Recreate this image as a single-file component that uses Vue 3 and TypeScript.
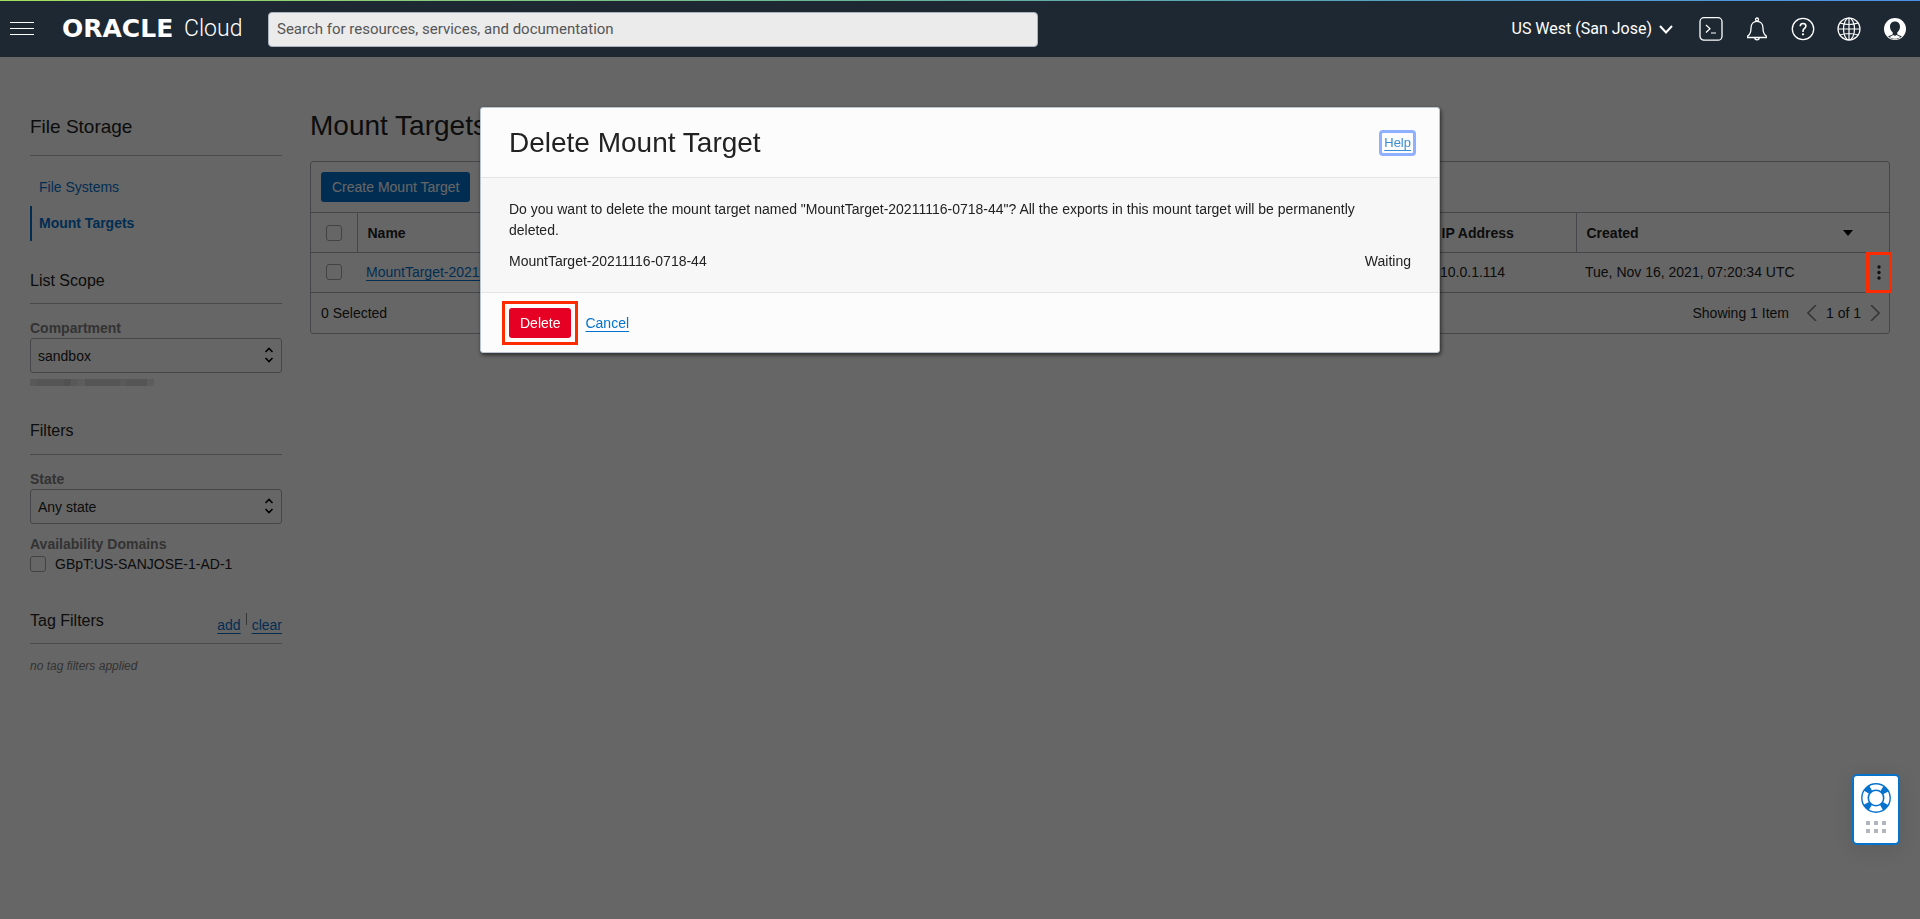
<script setup lang="ts">
import { ref } from 'vue'

interface MountTarget {
  name: string
  ip: string
  created: string
}

const region = 'US West (San Jose)'
const domain = 'GBpT:US-SANJOSE-1-AD-1'
const compartment = ref('sandbox')
const state = ref('Any state')
const targets: MountTarget[] = [
  { name: 'MountTarget-20211116-0718-44', ip: '10.0.1.114', created: 'Tue, Nov 16, 2021, 07:20:34 UTC' },
]
const redacted: number[] = [2, 3, 3, 3, 3, 4, 2, 1, 3, 3, 3, 3, 3, 2, 3, 3, 3, 1]
</script>

<template>
  <div class="console">
    <header class="topbar">
      <button class="icon-btn menu" aria-label="Menu">
        <svg width="24" height="14" viewBox="0 0 24 14"><path d="M0 .5h24M0 6.500h24M0 12.500h24" stroke="#fff" /></svg>
      </button>
      <a class="brand" href="#"><span class="brand-main">ORACLE</span><span class="brand-sub">Cloud</span></a>
      <input class="search" type="search" aria-label="Search" placeholder="Search for resources, services, and documentation" />
      <div class="tools">
        <button class="region">
          {{ region }}
          <svg width="14" height="9" viewBox="0 0 14 9"><path d="M1 1l6 6.500L13 1" fill="none" stroke="#fff" stroke-width="2" /></svg>
        </button>
        <button class="icon-btn" aria-label="Cloud Shell">
          <svg width="24" height="24" viewBox="0 0 24 24" fill="none" stroke="#fff"><rect x="1" y=".7" width="22" height="22.500" rx="4" stroke-width="1.300" /><path d="M7 8l4 3.700L7 15.500M12 16h5" stroke-width="1.200" /></svg>
        </button>
        <button class="icon-btn" aria-label="Notifications">
          <svg width="24" height="24" viewBox="0 0 24 24" fill="none" stroke="#fff" stroke-width="1.300"><circle cx="12" cy="2.500" r="1.500" /><path d="M2.700 20.500V19C5.500 17.500 6 15.500 6 11c0-4 2.500-6.700 6-6.700s6 2.700 6 6.700c0 4.500.5 6.500 3.300 8v1.500zM9.700 20.700c.2 2.800 4.400 2.800 4.600 0" /></svg>
        </button>
        <button class="icon-btn" aria-label="Help menu">
          <svg width="24" height="24" viewBox="0 0 24 24" fill="none" stroke="#fff" stroke-width="1.300"><circle cx="12" cy="12" r="10.700" /><path d="M9.200 9.200c.1-1.800 1.200-2.700 2.800-2.700 1.700 0 2.900 1 2.900 2.600 0 2.300-2.900 2.400-2.900 5V15" stroke-width="1.600" /><circle cx="12" cy="17.300" r=".5" fill="#fff" /></svg>
        </button>
        <button class="icon-btn" aria-label="Language">
          <svg width="24" height="24" viewBox="0 0 24 24" fill="none" stroke="#fff" stroke-width="1.200"><circle cx="12" cy="12" r="11" /><ellipse cx="12" cy="12" rx="5.500" ry="11" /><path d="M12 1v22M1 12h22M3 6q9 3 18 0M3 18q9-3 18 0" /></svg>
        </button>
        <button class="icon-btn" aria-label="Profile">
          <svg width="24" height="24" viewBox="0 0 24 24"><circle cx="12" cy="12" r="11" fill="#fff" /><path d="M12 4.500c3.200 0 5 2.200 5 5.200 0 2.500-1.200 4.500-2.700 5.500v2.200c1.700.8 3.500 1.200 4.600 2.200C17 21.300 14.700 22.200 12 22.200S7 21.300 5.100 19.600c1.100-1 2.900-1.400 4.600-2.200v-2.200C8.200 14.200 7 12.200 7 9.700c0-3 1.800-5.200 5-5.200z" fill="#1e2832" /><path d="M6.500 20l3.800-2c1 .9 2.400.9 3.400 0l3.800 2c-3 2.400-8 2.400-11 0z" fill="#fff" /></svg>
        </button>
      </div>
    </header>

    <div class="page">
      <aside class="sidebar">
        <h2 class="service">File Storage</h2>
        <nav class="nav">
          <a href="#">File Systems</a>
          <a href="#" class="active">Mount Targets</a>
        </nav>

        <section class="scope">
          <h3>List Scope</h3>
          <label class="caption" for="compartment">Compartment</label>
          <div class="select">
            <select id="compartment" v-model="compartment"><option>sandbox</option></select>
            <svg width="10" height="16" viewBox="0 0 10 16"><path d="M1.500 5L5 1.500 8.500 5M1.500 11L5 14.500 8.500 11" /></svg>
          </div>
          <div class="redacted"><i v-for="(tone, i) in redacted" :key="i" :class="'tone-' + tone"></i></div>
        </section>

        <section class="filters">
          <h3>Filters</h3>
          <label class="caption" for="state">State</label>
          <div class="select">
            <select id="state" v-model="state"><option>Any state</option></select>
            <svg width="10" height="16" viewBox="0 0 10 16"><path d="M1.500 5L5 1.500 8.500 5M1.500 11L5 14.500 8.500 11" /></svg>
          </div>
          <div class="caption domains">Availability Domains</div>
          <label class="check"><input type="checkbox" />{{ domain }}</label>
        </section>

        <section>
          <div class="tag-head">
            <h3>Tag Filters</h3>
            <div class="tag-links"><a href="#">add</a><span class="bar"></span><a href="#">clear</a></div>
          </div>
          <p class="none">no tag filters applied</p>
        </section>
      </aside>

      <main class="main">
        <h1>Mount Targets</h1>
        <div class="panel">
          <div class="toolbar"><button class="primary">Create Mount Target</button></div>
          <table>
            <colgroup><col class="c-check" /><col /><col class="c-ip" /><col class="c-created" /></colgroup>
            <thead>
              <tr>
                <th class="cell-check"><input type="checkbox" aria-label="Select all" /></th>
                <th>Name</th>
                <th>IP Address</th>
                <th>
                  <div class="sorted">Created <svg width="10" height="6" viewBox="0 0 10 6"><path d="M0 0h10L5 6z" fill="#000" /></svg></div>
                </th>
              </tr>
            </thead>
            <tbody>
              <tr v-for="t in targets" :key="t.name">
                <td class="cell-check"><input type="checkbox" :aria-label="'Select ' + t.name" /></td>
                <td><a href="#">{{ t.name }}</a></td>
                <td>{{ t.ip }}</td>
                <td class="cell-created">
                  {{ t.created }}
                  <button class="kebab" aria-label="Actions">
                    <svg width="4" height="15" viewBox="0 0 4 15"><circle cx="2" cy="2" r="1.700" /><circle cx="2" cy="7.500" r="1.700" /><circle cx="2" cy="13" r="1.700" /></svg>
                  </button>
                </td>
              </tr>
            </tbody>
          </table>
          <div class="foot">
            <span>0 Selected</span>
            <span class="count">Showing 1 Item</span>
            <div class="pager">
              <button aria-label="Previous page"><svg width="10" height="16" viewBox="0 0 10 16"><path d="M9 0L1 8l8 8" /></svg></button>
              <span>1 of 1</span>
              <button aria-label="Next page"><svg width="10" height="16" viewBox="0 0 10 16"><path d="M1 0l8 8-8 8" /></svg></button>
            </div>
          </div>
        </div>
      </main>
    </div>

    <div class="overlay">
      <div class="modal" role="dialog" aria-labelledby="dialog-title">
        <div class="modal-head">
          <h2 id="dialog-title">Delete Mount Target</h2>
          <a class="help" href="#">Help</a>
        </div>
        <div class="modal-body">
          <p>Do you want to delete the mount target named "{{ targets[0].name }}"? All the exports in this mount target will be permanently deleted.</p>
          <div class="status"><span>{{ targets[0].name }}</span><span>Waiting</span></div>
        </div>
        <div class="modal-foot">
          <div class="highlight"><button class="danger">Delete</button></div>
          <a href="#">Cancel</a>
        </div>
      </div>
    </div>

    <button class="support" aria-label="Support">
      <svg width="30" height="30" viewBox="0 0 30 30" fill="none" stroke="#0572ce">
        <circle cx="15" cy="15" r="11" stroke-width="7" stroke-dasharray="5.600 11.679" stroke-dashoffset="-5.839" />
        <circle cx="15" cy="15" r="14.200" stroke-width="1.400" />
        <circle cx="15" cy="15" r="7.700" stroke-width="1.600" />
      </svg>
      <svg width="20" height="12" viewBox="0 0 20 12" fill="#b0b6bb"><path d="M0 0h4v4H0zM8 0h4v4H8zM16 0h4v4h-4zM0 8h4v4H0zM8 8h4v4H8zM16 8h4v4h-4z" /></svg>
    </button>
  </div>
</template>

<style>
body {
  margin: 0;
  background: #fff;
}
</style>

<style scoped>
.console {
  min-height: 100vh;
  font: 14px/20px "Liberation Sans", Arial, sans-serif;
  color: #222;
}
.console * {
  box-sizing: border-box;
}
button {
  font: inherit;
  border: 0;
  padding: 0;
  background: none;
  cursor: pointer;
}
h1, h2, h3, p {
  margin: 0;
  font-weight: 400;
}
a {
  color: #0572ce;
  text-underline-offset: 3px;
}

.topbar {
  position: relative;
  z-index: 20;
  display: flex;
  align-items: center;
  height: 57px;
  padding: 1px 10px 0;
  background: linear-gradient(90deg, #a4e05f, #62b0a0 50%, #4a90e8) top / 100% 1px no-repeat #1e2832;
  color: #fff;
}
.icon-btn {
  display: flex;
}
.brand {
  display: flex;
  align-items: center;
  gap: 8px;
  width: 206px;
  margin-left: 28px;
  color: #fff;
  text-decoration: none;
  line-height: 24px;
}
.brand-main {
  width: 114px;
  font-family: "DejaVu Sans", sans-serif;
  font-weight: 700;
  font-size: 25px;
}
.brand-sub {
  font-family: Roboto, "Liberation Sans", sans-serif;
  font-size: 23px;
  font-weight: 300;
}
.search {
  width: 40.500%;
  max-width: 770px;
  height: 35px;
  padding: 0 8px;
  border: 1px solid #aab4be;
  border-radius: 4px;
  background: #ebebeb;
  font: 15px/20px Roboto, "Liberation Sans", sans-serif;
}
.search::placeholder {
  color: #555;
  opacity: 1;
}
.tools {
  display: flex;
  align-items: center;
  gap: 22px;
  margin-left: auto;
  padding-right: 3px;
}
.region {
  display: flex;
  align-items: center;
  gap: 7px;
  margin-right: 4px;
  color: #fff;
  font: 16px/20px Roboto, "Liberation Sans", sans-serif;
}

.page {
  display: flex;
  gap: 28px;
  padding: 57px 30px 40px;
}
.sidebar {
  flex: 0 0 252px;
}
.service {
  padding-bottom: 16px;
  border-bottom: 1px solid #b4b8bb;
  font-size: 19px;
  line-height: 25px;
}
.nav {
  display: flex;
  flex-direction: column;
  gap: 1px;
  padding-top: 14px;
}
.nav a {
  padding: 0 7px;
  border-left: 2px solid transparent;
  line-height: 35px;
  text-decoration: none;
}
.nav .active {
  border-color: #0572ce;
  font-weight: 700;
}
.scope {
  padding-top: 30px;
}
h3 {
  padding-bottom: 12px;
  border-bottom: 1px solid #b4b8bb;
  font-size: 16px;
  line-height: 20px;
}
.caption {
  display: block;
  margin-top: 14px;
  color: #808080;
  font-weight: 700;
}
.select {
  position: relative;
}
.select select {
  display: block;
  width: 100%;
  height: 35px;
  padding: 0 7px;
  border: 1px solid #aab0b6;
  border-radius: 3px;
  background: none;
  appearance: none;
  font: inherit;
  color: inherit;
}
.select svg {
  position: absolute;
  right: 8px;
  top: 9px;
  fill: none;
  stroke: #000;
  stroke-width: 1.600;
  pointer-events: none;
}
.redacted {
  display: flex;
  width: 124px;
  height: 7px;
  margin-top: 6px;
}
.redacted i {
  flex: 1;
}
.tone-1 { background: #e8e8e8; }
.tone-2 { background: #dedede; }
.tone-3 { background: #d4d4d4; }
.tone-4 { background: #cacaca; }
.filters {
  padding-top: 35px;
}
.filters h3 {
  padding-bottom: 13px;
}
.filters .domains {
  margin-top: 10px;
}
.check {
  display: flex;
  align-items: center;
  gap: 9px;
}
input[type="checkbox"] {
  display: block;
  width: 16px;
  height: 16px;
  margin: 0;
  border: 1px solid #a0a5aa;
  border-radius: 3px;
  appearance: none;
}
.tag-head {
  display: flex;
  justify-content: space-between;
  margin-top: 37px;
  border-bottom: 1px solid #b4b8bb;
}
.tag-head h3 {
  border: 0;
}
.tag-links {
  display: flex;
  gap: 5px;
  padding-top: 4px;
}
.bar {
  width: 1px;
  height: 12px;
  margin-top: -2px;
  background: #888;
}
.none {
  padding-top: 12px;
  color: #808080;
  font-size: 12px;
  font-style: italic;
}

.main {
  flex: 1;
  min-width: 0;
}
h1 {
  font-size: 28px;
  line-height: 34px;
  margin: -5px 0 18px;
}
.panel {
  border: 1px solid #aab0b6;
  border-radius: 3px;
}
.toolbar {
  padding: 10px;
}
.primary {
  display: block;
  height: 30px;
  padding: 0 11px;
  border-radius: 3px;
  background: #0572ce;
  color: #fff;
}
table {
  width: 100%;
  border-collapse: collapse;
  table-layout: fixed;
  border-top: 1px solid #aab0b6;
}
.c-check { width: 46px; }
.c-ip { width: 145px; }
.c-created { width: 313px; }
th, td {
  height: 40px;
  padding: 0 10px;
  border-bottom: 1px solid #aab0b6;
  text-align: left;
}
td {
  padding: 0 9px 2px;
}
th + th {
  border-left: 1px solid #aab0b6;
}
.cell-check {
  padding: 0 15px;
}
td.cell-check {
  padding: 0 15px 2px;
}
.sorted {
  display: flex;
  align-items: center;
  justify-content: space-between;
  padding-right: 26px;
}
.cell-created {
  position: relative;
}
.kebab {
  position: absolute;
  z-index: 15;
  top: -1px;
  right: -3px;
  display: flex;
  align-items: center;
  justify-content: center;
  width: 26px;
  height: 41px;
  border: 3px solid #fe2b00;
  fill: #111;
}
.foot {
  display: flex;
  align-items: center;
  height: 40px;
  padding: 0 9px 1px 10px;
}
.count {
  margin-left: auto;
}
.pager {
  display: flex;
  align-items: center;
  gap: 9px;
  margin-left: 18px;
}
.pager svg {
  display: block;
  fill: none;
  stroke: #888;
  stroke-width: 1.600;
}

.overlay {
  position: fixed;
  inset: 0;
  z-index: 10;
  display: flex;
  align-items: flex-start;
  justify-content: center;
  padding-top: 107px;
  background: rgba(0, 0, 0, 0.6);
}
.modal {
  width: 50%;
  border: 1px solid #b8c4d0;
  border-radius: 3px;
  background: #fcfcfc;
  box-shadow: 1px 2px 4px rgba(0, 0, 0, 0.6);
}
.modal-head {
  display: flex;
  align-items: center;
  justify-content: space-between;
  padding: 18px 23px 17px 28px;
}
.modal-head h2 {
  font-size: 28px;
  line-height: 34px;
}
.help {
  padding: 0 2px;
  border: 3px solid #8fb0ff;
  border-radius: 4px;
  color: #3b8dd8;
  font-size: 13px;
}
.modal-body {
  padding: 21px 28px 20px;
  border: solid #e2e4e5;
  border-width: 1px 0;
  background: #f7f7f7;
  line-height: 21px;
}
.modal-body p {
  padding-right: 28px;
}
.status {
  display: flex;
  justify-content: space-between;
  margin-top: 10px;
}
.modal-foot {
  display: flex;
  align-items: center;
  gap: 7px;
  padding: 8px 21px 7px;
}
.highlight {
  padding: 4px;
  border: 3px solid #fe2b00;
}
.danger {
  display: block;
  height: 30px;
  padding: 0 11px;
  border-radius: 3px;
  background: #e60023;
  color: #fff;
}
.support {
  position: fixed;
  right: 20px;
  bottom: 74px;
  z-index: 30;
  display: flex;
  flex-direction: column;
  align-items: center;
  gap: 8px;
  width: 48px;
  padding: 7px 0 10px;
  border: 2px solid #0572ce;
  border-radius: 5px;
  background: #fff;
  box-shadow: 0 4px 20px rgba(0, 0, 0, 0.1);
}
</style>
